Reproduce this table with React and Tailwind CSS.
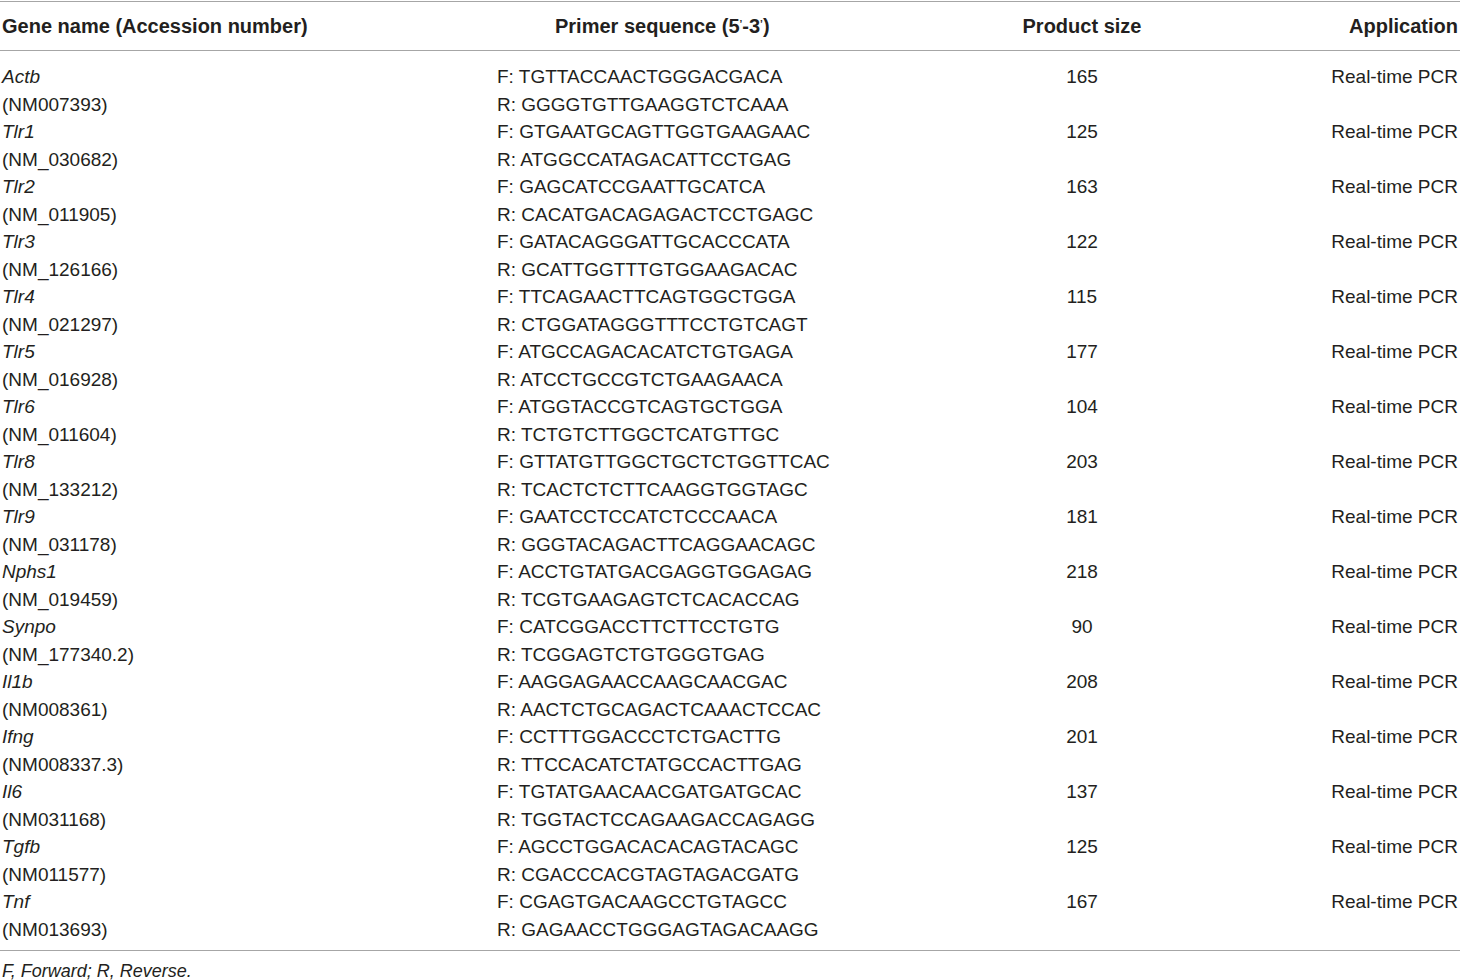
import React from 'react';

const rows = [
  ['Actb', '(NM007393)', 'TGTTACCAACTGGGACGACA', 'GGGGTGTTGAAGGTCTCAAA', '165'],
  ['Tlr1', '(NM_030682)', 'GTGAATGCAGTTGGTGAAGAAC', 'ATGGCCATAGACATTCCTGAG', '125'],
  ['Tlr2', '(NM_011905)', 'GAGCATCCGAATTGCATCA', 'CACATGACAGAGACTCCTGAGC', '163'],
  ['Tlr3', '(NM_126166)', 'GATACAGGGATTGCACCCATA', 'GCATTGGTTTGTGGAAGACAC', '122'],
  ['Tlr4', '(NM_021297)', 'TTCAGAACTTCAGTGGCTGGA', 'CTGGATAGGGTTTCCTGTCAGT', '115'],
  ['Tlr5', '(NM_016928)', 'ATGCCAGACACATCTGTGAGA', 'ATCCTGCCGTCTGAAGAACA', '177'],
  ['Tlr6', '(NM_011604)', 'ATGGTACCGTCAGTGCTGGA', 'TCTGTCTTGGCTCATGTTGC', '104'],
  ['Tlr8', '(NM_133212)', 'GTTATGTTGGCTGCTCTGGTTCAC', 'TCACTCTCTTCAAGGTGGTAGC', '203'],
  ['Tlr9', '(NM_031178)', 'GAATCCTCCATCTCCCAACA', 'GGGTACAGACTTCAGGAACAGC', '181'],
  ['Nphs1', '(NM_019459)', 'ACCTGTATGACGAGGTGGAGAG', 'TCGTGAAGAGTCTCACACCAG', '218'],
  ['Synpo', '(NM_177340.2)', 'CATCGGACCTTCTTCCTGTG', 'TCGGAGTCTGTGGGTGAG', '90'],
  ['Il1b', '(NM008361)', 'AAGGAGAACCAAGCAACGAC', 'AACTCTGCAGACTCAAACTCCAC', '208'],
  ['Ifng', '(NM008337.3)', 'CCTTTGGACCCTCTGACTTG', 'TTCCACATCTATGCCACTTGAG', '201'],
  ['Il6', '(NM031168)', 'TGTATGAACAACGATGATGCAC', 'TGGTACTCCAGAAGACCAGAGG', '137'],
  ['Tgfb', '(NM011577)', 'AGCCTGGACACACAGTACAGC', 'CGACCCACGTAGTAGACGATG', '125'],
  ['Tnf', '(NM013693)', 'CGAGTGACAAGCCTGTAGCC', 'GAGAACCTGGGAGTAGACAAGG', '167'],
];

const App = () => {
  return (
    <div className="w-[1460px] h-[980px] bg-white text-[#231f20] text-[19px] font-['Liberation_Sans',Arial,sans-serif]">
      <div className="border-t-[1.5px] border-[#a6a6a6] mt-px" />

      {/* header */}
      <div className="grid grid-cols-[495px_450px_270px_1fr] px-[2px] h-[48px] items-center font-bold text-[20px] leading-[27px]">
        <div>Gene name (Accession number)</div>
        <div className="pl-[58px]">
          Primer sequence (5<sup className="text-[10px]">’</sup>-3<sup className="text-[10px]">’</sup>)
        </div>
        <div className="text-center">Product size</div>
        <div className="text-right">Application</div>
      </div>
      <div className="border-t-[1.5px] border-[#a6a6a6]" />

      {/* body */}
      <div className="pt-[12px] pb-[7px]">
        {rows.map((r) => (
          <div key={r[0]} className="grid grid-cols-[495px_450px_270px_1fr] px-[2px] leading-[27.5px]">
            <div>
              <div className="italic">{r[0]}</div>
              <div>{r[1]}</div>
            </div>
            <div>
              <div>F: {r[2]}</div>
              <div>R: {r[3]}</div>
            </div>
            <div className="text-center">{r[4]}</div>
            <div className="text-right">Real-time PCR</div>
          </div>
        ))}
      </div>
      <div className="border-t-[1.5px] border-[#a6a6a6]" />

      <div className="px-[2px] pt-[10px] italic text-[18px] leading-[20px]">F, Forward; R, Reverse.</div>
    </div>
  );
};

export default App;
